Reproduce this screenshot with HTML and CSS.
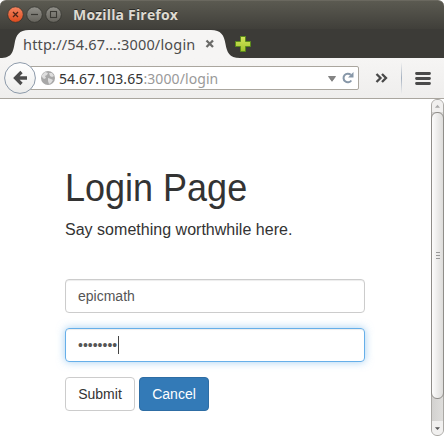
FILE: index.html
```html
<!DOCTYPE html>
<html lang="en">
<head>
<meta charset="utf-8">
<title>Login Page</title>
<link rel="stylesheet" href="styles.css">
</head>
<body>
<div class="window">
  <header class="titlebar">
    <svg class="controls" width="56" height="18" viewBox="0 0 56 18">
      <defs>
        <linearGradient id="orange" x2="0" y2="1"><stop stop-color="#f58561"/><stop offset="1" stop-color="#dc4a1c"/></linearGradient>
        <linearGradient id="grey" x2="0" y2="1"><stop stop-color="#91908a"/><stop offset="1" stop-color="#65635c"/></linearGradient>
      </defs>
      <circle cx="8.5" cy="8.6" r="7.800" fill="url(#orange)" stroke="#34332e" stroke-width=".8"/>
      <path d="M6 6l5 5M11 6l-5 5" stroke="#4b2418" stroke-width="1.3"/>
      <circle cx="27.5" cy="8.6" r="7.800" fill="url(#grey)" stroke="#34332e" stroke-width=".8"/>
      <path d="M24 8.5h7" stroke="#3a3934" stroke-width="1.2"/>
      <circle cx="46.5" cy="8.6" r="7.800" fill="url(#grey)" stroke="#34332e" stroke-width=".8"/>
      <rect x="43.5" y="5.5" width="6" height="6" fill="none" stroke="#3a3934" stroke-width="1.1"/>
    </svg>
    <span class="window-title">Mozilla Firefox</span>
  </header>
  <div class="tabs">
    <svg class="tab-shape" width="240" height="28" viewBox="0 0 240 28">
      <path d="M0 28C12 28 13 22 14.500 14C16 5 19 0 29 0H211C221 0 224 5 225.500 14C227 22 229 28 240 28Z" fill="#f6f5f4"/>
    </svg>
    <span class="tab-title">http://54.67…:3000/login</span>
    <svg class="tab-close" width="10" height="10" viewBox="0 0 10 10"><path d="M1.500 1.500l6.500 6.500M8 1.500l-6.500 6.500" stroke="#6b6b69" stroke-width="2.300"/></svg>
    <svg class="tab-new" width="16" height="16" viewBox="0 0 16 16">
      <defs><linearGradient id="green" x2="0" y2="1"><stop stop-color="#d5e65c"/><stop offset="1" stop-color="#a0c32c"/></linearGradient></defs>
      <path d="M5.500.5h5v5h5v5h-5v5h-5v-5h-5v-5h5z" fill="url(#green)" stroke="#5a8a1c"/>
    </svg>
  </div>
  <nav class="toolbar">
    <svg class="back" width="34" height="34" viewBox="0 0 34 34">
      <defs><linearGradient id="disc" x2="0" y2="1"><stop stop-color="#fff"/><stop offset="1" stop-color="#ececeb"/></linearGradient></defs>
      <circle cx="17" cy="17" r="15.400" fill="url(#disc)" stroke="#8d9aaa" stroke-width="1"/>
      <path d="M24 17H13.500M18.500 11L12.500 17l6 6" fill="none" stroke="#4b4b4b" stroke-width="3.300"/>
    </svg>
    <div class="address">
      <svg class="globe" width="14" height="14" viewBox="0 0 14 14">
        <circle cx="7" cy="7" r="7" fill="#a8a8a8"/>
        <path d="M1 4L4 1l3 1-1 2-2 1 1 2-2 1-2-2zM8 2l3 0 2 3-2 1-2-1zM7 7l3 1 2 1-2 3-2 1-1-3z" fill="#dedede"/>
      </svg>
      <span class="url">54.67.103.65<span class="url-path">:3000/login</span></span>
      <svg class="reload" width="30" height="14" viewBox="0 0 30 14">
        <path d="M.5 5.500h7L4 10.300z" fill="#858585" stroke="#696969" stroke-width=".7"/>
        <path d="M22.800 3.800A4.300 4.300 0 1 0 23.300 9.500" fill="none" stroke="#8797a8" stroke-width="2"/>
        <path d="M25.500 1v5.600H20z" fill="#8797a8"/>
      </svg>
    </div>
    <svg class="overflow" width="14" height="10" viewBox="0 0 14 10"><path d="M1.500 1l4 4-4 4M7 1l4 4-4 4" fill="none" stroke="#484848" stroke-width="2.300"/></svg>
    <span class="divider"></span>
    <svg class="menu" width="16" height="13" viewBox="0 0 16 13"><path d="M1.500 1.500h13M1.500 6.500h13M1.500 11.500h13" stroke="#4a4a4a" stroke-width="2.800" stroke-linecap="round"/></svg>
  </nav>
  <div class="viewport">
    <main class="page">
      <h1>Login Page</h1>
      <p>Say something worthwhile here.</p>
      <form>
        <div class="field">epicmath</div>
        <div class="field focused"><span class="dots">••••••••</span><span class="caret"></span></div>
        <div class="actions"><button type="button" class="btn">Submit</button><button type="button" class="btn primary">Cancel</button></div>
      </form>
    </main>
    <div class="scrollbar">
      <svg class="step" width="13" height="13" viewBox="0 0 13 13"><path d="M3.500 8.500L6.500 5l3 3.500z" fill="#aaa"/></svg>
      <div class="thumb"><i></i><i></i><i></i></div>
      <svg class="step down" width="13" height="14" viewBox="0 0 13 14"><path d="M3.500 6L6.500 9.500l3-3.500z" fill="#555"/></svg>
    </div>
  </div>
</div>
</body>
</html>
```
FILE: styles.css
```css
* { box-sizing: border-box; }
body { margin: 0; background: #fff; overflow: hidden; }
.window { width: 444px; height: 436px; display: flex; flex-direction: column; background: #fff; }
.titlebar { height: 29px; flex: none; display: flex; align-items: center; padding-left: 7px; background: linear-gradient(#5b5a51, #403f3a); border-top: 1px solid #6a685f; border-radius: 6px 6px 0 0; }
.window-title { margin-left: 10px; font: bold 14px/20px "Open Sans", sans-serif; letter-spacing: .18px; color: #dfdbd2; text-shadow: 0 -1px #2c2b27; white-space: nowrap; }
.tabs { height: 29px; flex: none; padding-top: 1px; display: flex; align-items: center; background: #3c3b37; position: relative; }
.tab-shape { position: absolute; left: 0; top: 1px; }
.tab-title { position: relative; margin-left: 23px; width: 182px; font: 14.5px/20px "Noto Sans", sans-serif; letter-spacing: .18px; color: #4c4c4c; white-space: nowrap; }
.tab-close { position: relative; }
.tab-new { margin-left: 20px; }
.toolbar { height: 41px; flex: none; display: flex; align-items: center; background: linear-gradient(#f6f5f4, #efeeed); border-bottom: 1px solid #aaa69f; padding-left: 3px; }
.back { flex: none; z-index: 1; }
.address { width: 330px; height: 24px; margin-left: -8px; padding-left: 11px; display: flex; align-items: center; background: #fff; border: 1px solid #aaa69e; border-radius: 2px; }
.globe { flex: none; }
.url { width: 269px; margin-left: 4px; padding-top: 2px; font: 14px/20px "Noto Sans", sans-serif; letter-spacing: .09px; color: #333; white-space: nowrap; }
.url-path { color: #999; }
.reload { flex: none; }
.overflow { margin-left: 16px; }
.divider { width: 1px; height: 32px; margin-left: 12px; background: linear-gradient(transparent, #a5b1c0, transparent); }
.menu { margin-left: 13px; }
.viewport { flex: 1; display: flex; justify-content: space-between; }
.page { width: 365px; padding: 70px 0 0 65px; font-family: "Liberation Sans", Arial, sans-serif; color: #333; }
h1 { margin: 0; font-size: 36px; line-height: 40px; font-weight: 400; white-space: nowrap; transform: scaleY(1.07); transform-origin: 0 32px; }
p { margin: 10px 0 0; font-size: 16px; line-height: 22px; letter-spacing: .02px; white-space: nowrap; }
form { margin-top: 38px; }
.field { height: 34px; margin-bottom: 15px; padding: 0 12px; display: flex; align-items: center; font-size: 14px; color: #555; border: 1px solid #ccc; border-radius: 4px; box-shadow: inset 0 1px 1px rgba(0,0,0,.075); }
.focused { border-color: #66afe9; box-shadow: inset 0 1px 1px rgba(0,0,0,.075), 0 0 8px rgba(102,175,233,.6); }
.caret { width: 1px; height: 18px; margin-left: 1px; background: #444; }
.actions { display: flex; gap: 4px; }
.btn { width: 70px; height: 34px; padding: 0; font: 14px/20px "Liberation Sans", Arial, sans-serif; color: #333; background: #fff; border: 1px solid #ccc; border-radius: 4px; }
.primary { color: #fff; background: #337ab7; border-color: #2e6da4; }
.scrollbar { width: 13px; display: flex; flex-direction: column; border: 1px solid #aaa8a4; border-radius: 6px; background: linear-gradient(90deg, #d3d2d0, #dedddb); }
.step { flex: none; width: 11px; height: 12px; background: #f1f0ef; border-radius: 5px 5px 0 0; }
.down { height: 14px; border-radius: 0 0 5px 5px; }
.thumb { height: 287px; margin: 0 -1px; border: 1px solid #8f8d89; border-radius: 6px; background: linear-gradient(90deg, #fcfcfc, #dddcda); display: flex; flex-direction: column; align-items: center; justify-content: center; gap: 2px; }
.thumb i { width: 4px; height: 1px; background: #999; }
.down { margin-top: auto; }
```
